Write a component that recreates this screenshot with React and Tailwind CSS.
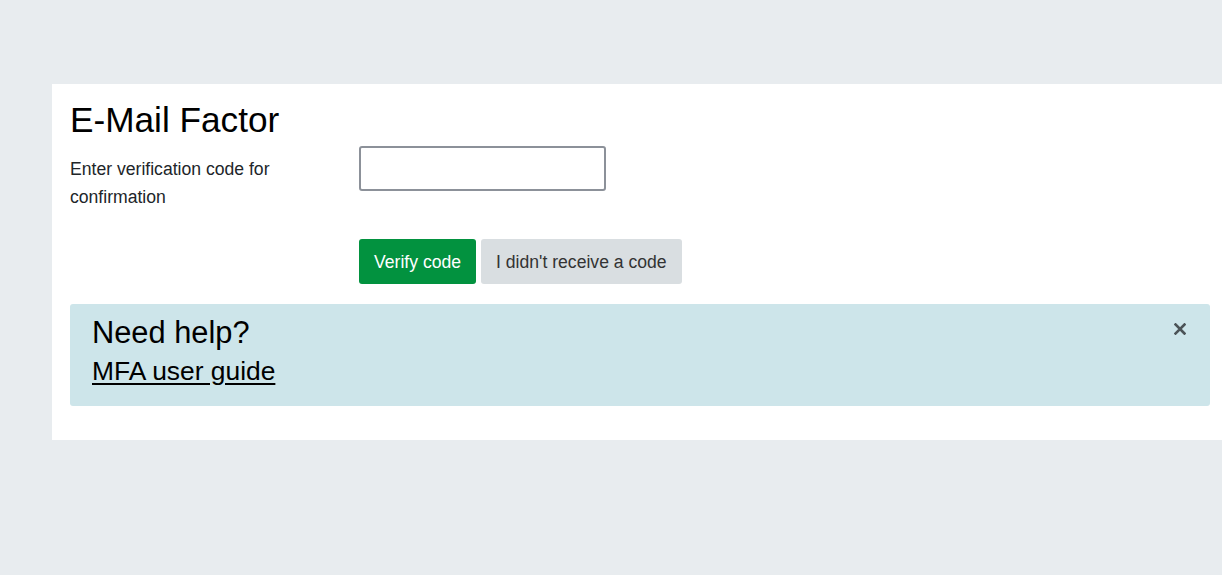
import React from 'react';

const CloseIcon = () => (
  <svg width="12" height="12" viewBox="0 0 12 12" className="block">
    <path d="M1.5 1.5 L10.5 10.5 M10.5 1.5 L1.5 10.5" stroke="#4b5357" strokeWidth="2.6" strokeLinecap="square" />
  </svg>
);

export default function App() {
  return (
    <div className="min-h-[575px] w-full overflow-hidden bg-[#e8ecef] pt-[84px] pl-[52px] font-['Liberation_Sans',Arial,sans-serif]">
      {/* card */}
      <div className="bg-white pt-[15px] pl-[18px] pr-[12px] pb-[34px]">
        <h1 className="text-[35.2px] leading-[42px] text-black mb-[5px]">E-Mail Factor</h1>

        <div className="grid grid-cols-[289px_1fr]">
          <label className="pt-[9px] pr-[20px] text-[17.6px] leading-[28px] text-[#212529]">
            Enter verification code for confirmation
          </label>
          <div>
            <input
              type="text"
              className="block w-[247px] h-[45px] rounded-[3px] border-2 border-[#8c9199] bg-white px-2 text-[17.6px] outline-none"
            />
          </div>

          <div className="col-start-2 mt-[28px] flex gap-[5px]">
            <button className="h-[45px] rounded-[3px] bg-[#02923f] px-[15px] pt-[2px] text-[17.6px] text-white">
              Verify code
            </button>
            <button className="h-[45px] rounded-[3px] bg-[#d9dee1] px-[15px] pt-[2px] text-[17.6px] text-[#333]">
              I didn't receive a code
            </button>
          </div>
        </div>

        {/* help alert */}
        <div className="mt-[20px] flex justify-between rounded-[3px] bg-[#cde5ea] pt-[10px] pb-[20px] pl-[22px] pr-[24px]">
          <div>
            <h2 className="text-[30.8px] leading-[37px] text-black">Need help?</h2>
            <a href="#" className="mt-[5px] block text-[26.4px] leading-[30px] text-black underline underline-offset-[3px]">
              MFA user guide
            </a>
          </div>
          <button className="mt-[9px] h-[12px]">
            <CloseIcon />
          </button>
        </div>
      </div>
    </div>
  );
}
